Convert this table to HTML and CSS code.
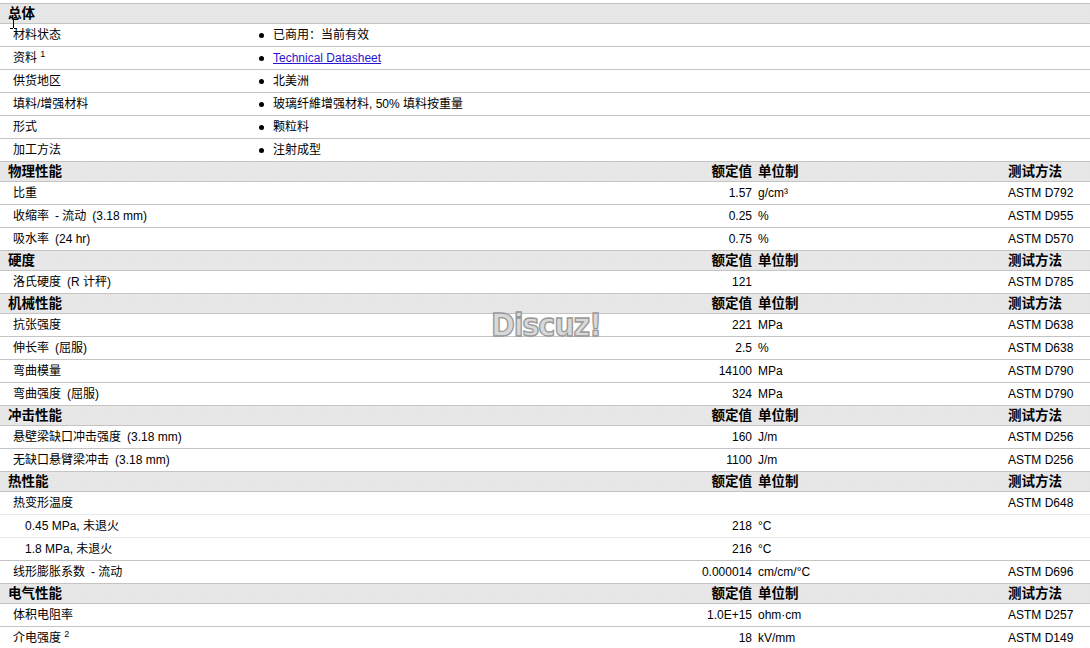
FILE: index.html
```html
<!DOCTYPE html>
<html lang="zh-CN">
<head>
<meta charset="utf-8">
<title>材料数据</title>
<link rel="stylesheet" href="styles.css">
</head>
<body>
<div class="sheet">
  <div class="head"><span class="h-lbl">总体</span></div>
  <div class="grow"><span class="lbl">材料状态</span><span class="gval"><i class="dot"></i>已商用：当前有效</span></div>
  <div class="grow"><span class="lbl">资料 <sup>1</sup></span><span class="gval"><i class="dot"></i><a href="#" class="link">Technical Datasheet</a></span></div>
  <div class="grow"><span class="lbl">供货地区</span><span class="gval"><i class="dot"></i>北美洲</span></div>
  <div class="grow"><span class="lbl">填料/增强材料</span><span class="gval"><i class="dot"></i>玻璃纤維增强材料, 50% 填料按重量</span></div>
  <div class="grow"><span class="lbl">形式</span><span class="gval"><i class="dot"></i>颗粒料</span></div>
  <div class="grow"><span class="lbl">加工方法</span><span class="gval"><i class="dot"></i>注射成型</span></div>

  <div class="head"><span class="h-lbl">物理性能</span><span class="h-val">额定值</span><span class="h-unit">单位制</span><span class="h-method">测试方法</span></div>
  <div class="prow"><span class="lbl">比重</span><span class="num">1.57</span><span class="unit">g/cm³</span><span class="method">ASTM D792</span></div>
  <div class="prow"><span class="lbl">收缩率<span class="cond">- 流动</span><span class="cond">(3.18 mm)</span></span><span class="num">0.25</span><span class="unit">%</span><span class="method">ASTM D955</span></div>
  <div class="prow"><span class="lbl">吸水率<span class="cond">(24 hr)</span></span><span class="num">0.75</span><span class="unit">%</span><span class="method">ASTM D570</span></div>

  <div class="head"><span class="h-lbl">硬度</span><span class="h-val">额定值</span><span class="h-unit">单位制</span><span class="h-method">测试方法</span></div>
  <div class="prow"><span class="lbl">洛氏硬度<span class="cond">(R 计秤)</span></span><span class="num">121</span><span class="unit"></span><span class="method">ASTM D785</span></div>

  <div class="head"><span class="h-lbl">机械性能</span><span class="h-val">额定值</span><span class="h-unit">单位制</span><span class="h-method">测试方法</span></div>
  <div class="prow"><span class="lbl">抗张强度</span><span class="num">221</span><span class="unit">MPa</span><span class="method">ASTM D638</span></div>
  <div class="prow"><span class="lbl">伸长率<span class="cond">(屈服)</span></span><span class="num">2.5</span><span class="unit">%</span><span class="method">ASTM D638</span></div>
  <div class="prow"><span class="lbl">弯曲模量</span><span class="num">14100</span><span class="unit">MPa</span><span class="method">ASTM D790</span></div>
  <div class="prow"><span class="lbl">弯曲强度<span class="cond">(屈服)</span></span><span class="num">324</span><span class="unit">MPa</span><span class="method">ASTM D790</span></div>

  <div class="head"><span class="h-lbl">冲击性能</span><span class="h-val">额定值</span><span class="h-unit">单位制</span><span class="h-method">测试方法</span></div>
  <div class="prow"><span class="lbl">悬壁梁缺口冲击强度<span class="cond">(3.18 mm)</span></span><span class="num">160</span><span class="unit">J/m</span><span class="method">ASTM D256</span></div>
  <div class="prow"><span class="lbl">无缺口悬臂梁冲击<span class="cond">(3.18 mm)</span></span><span class="num">1100</span><span class="unit">J/m</span><span class="method">ASTM D256</span></div>

  <div class="head"><span class="h-lbl">热性能</span><span class="h-val">额定值</span><span class="h-unit">单位制</span><span class="h-method">测试方法</span></div>
  <div class="prow light"><span class="lbl">热变形温度</span><span class="num"></span><span class="unit"></span><span class="method">ASTM D648</span></div>
  <div class="prow light"><span class="lbl sub">0.45 MPa, 未退火</span><span class="num">218</span><span class="unit">°C</span><span class="method"></span></div>
  <div class="prow"><span class="lbl sub">1.8 MPa, 未退火</span><span class="num">216</span><span class="unit">°C</span><span class="method"></span></div>
  <div class="prow"><span class="lbl">线形膨胀系数<span class="cond">- 流动</span></span><span class="num">0.000014</span><span class="unit">cm/cm/°C</span><span class="method">ASTM D696</span></div>

  <div class="head"><span class="h-lbl">电气性能</span><span class="h-val">额定值</span><span class="h-unit">单位制</span><span class="h-method">测试方法</span></div>
  <div class="prow"><span class="lbl">体积电阻率</span><span class="num">1.0E+15</span><span class="unit">ohm·cm</span><span class="method">ASTM D257</span></div>
  <div class="prow"><span class="lbl">介电强度 <sup>2</sup></span><span class="num">18</span><span class="unit">kV/mm</span><span class="method">ASTM D149</span></div>

  <div class="watermark">Discuz!</div>
  <svg class="cursor" width="9" height="12" viewBox="0 0 9 12"><path d="M1 0.5h3M5 0.5h3M4.5 1v10M1 11.5h3M5 11.5h3" stroke="#000" stroke-width="1" fill="none"/></svg>
</div>
</body>
</html>
```

FILE: styles.css
```css
html, body {
  margin: 0;
  padding: 0;
  height: 648px;
  overflow: hidden;
  background: #fff;
}

body {
  font-family: "Liberation Sans", "Noto Sans CJK SC", sans-serif;
  font-size: 12px;
  color: #000;
}

.sheet {
  position: relative;
  margin-top: 3px;
  border-top: 1px solid #c4c4c4;
  width: 1090px;
}

.head,
.prow,
.grow {
  display: grid;
  grid-template-columns: 618px 136px 250px 86px;
  align-items: center;
}

.grow {
  grid-template-columns: 259px 1fr;
}

.head {
  height: 19px;
  border-bottom: 1px solid #c4c4c4;
  background-color: #e6e6e6;
  background-image: radial-gradient(circle, #ececec 0.6px, transparent 0.8px);
  background-size: 3px 3px;
  font-weight: bold;
  font-size: 13.5px;
  line-height: 19px;
}

.h-lbl {
  padding-left: 8px;
}

.h-val {
  text-align: right;
  padding-right: 2px;
}

.h-unit,
.h-method {
  padding-left: 4px;
}

.prow,
.grow {
  height: 22px;
  border-bottom: 1px solid #c4c4c4;
  line-height: 23px;
  white-space: nowrap;
}

.prow.light {
  border-bottom-color: #e9e9e9;
}

.lbl {
  padding-left: 13px;
}

.lbl.sub {
  padding-left: 25px;
}

.cond {
  margin-left: 6px;
}

sup {
  font-size: 9px;
  line-height: 0;
  vertical-align: 5px;
}

.num {
  text-align: right;
  padding-right: 2px;
}

.unit,
.method {
  padding-left: 4px;
}

.gval {
  display: flex;
  align-items: center;
}

.dot {
  display: inline-block;
  width: 5px;
  height: 5px;
  border-radius: 50%;
  background: #000;
  margin-right: 9px;
}

.link {
  color: #2a16d0;
  text-decoration: underline;
}

.watermark {
  position: absolute;
  left: 491px;
  top: 303px;
  font-family: "DejaVu Sans Condensed", "DejaVu Sans", sans-serif;
  font-weight: bold;
  font-size: 32px;
  line-height: 36px;
  letter-spacing: -1.2px;
  color: #d8d8d8;
  -webkit-text-stroke: 1.3px #999;
}

.cursor {
  position: absolute;
  left: 9px;
  top: 13px;
}
```
